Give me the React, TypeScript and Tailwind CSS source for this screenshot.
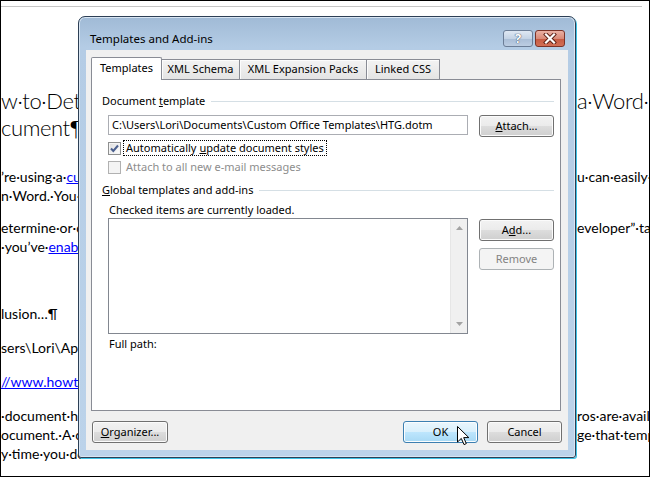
import React from 'react'

const ui = "font-['Noto_Sans','Open_Sans',sans-serif] text-[11px] text-black"

function WinButton({
    children,
    className = '',
    hot = false,
    disabled = false,
}: {
    children: React.ReactNode
    className?: string
    hot?: boolean
    disabled?: boolean
}) {
    let look =
        'border-[#707070] bg-[linear-gradient(#f2f2f2_0%,#ebebeb_49%,#dddddd_50%,#cfcfcf_100%)] shadow-[inset_0_0_0_1px_#fbfbfb]'
    if (hot) {
        look =
            'border-[#3c7fb1] bg-[linear-gradient(#eaf6fd_0%,#d9f0fc_49%,#bee6fd_50%,#a7d9f5_100%)] shadow-[inset_0_0_0_1px_#fbfdfe]'
    }
    if (disabled) {
        look = 'border-[#adb2b5] bg-[#f4f4f4] text-[#838383]'
    }
    return (
        <div className={`h-[22px] w-[75px] shrink-0 rounded-[3px] border flex items-center justify-center ${look} ${className}`}>
            {children}
        </div>
    )
}

function Checkbox({ checked = false, disabled = false }: { checked?: boolean; disabled?: boolean }) {
    return (
        <div
            className={`w-[13px] h-[13px] shrink-0 border flex items-center justify-center ${
                disabled
                    ? 'border-[#b1b1b1] bg-[#f4f4f4]'
                    : 'border-[#8e8f8f] bg-[linear-gradient(135deg,#dcdcdc,#ffffff)] shadow-[inset_0_0_0_1px_#f4f4f4]'
            }`}
        >
            {checked && (
                <svg width="11" height="11" viewBox="0 0 11 11">
                    <path d="M2 5.5 L4.3 8 L9 2.5" fill="none" stroke="#4a5f8e" strokeWidth="2" />
                </svg>
            )}
        </div>
    )
}

function GroupHeader({ children }: { children: React.ReactNode }) {
    return (
        <div className="flex items-center h-[16px] pl-[10px] pr-[6px] gap-[6px]">
            <span className="whitespace-nowrap">{children}</span>
            <div className="flex-1 h-px bg-[#d5dfe5]" />
        </div>
    )
}

// one line of the Word page: the dialog hides its middle
function DocRow({ left, right, className = '' }: { left?: React.ReactNode; right?: React.ReactNode; className?: string }) {
    return (
        <div className={`flex whitespace-nowrap ${className}`}>
            <div className="w-[80px] overflow-hidden">{left}</div>
            <div className="flex-1" />
            <div className="w-[72px] overflow-hidden">{right}</div>
        </div>
    )
}

function Link({ children }: { children: React.ReactNode }) {
    return <span className="text-[#0000ff] underline">{children}</span>
}

export default function App() {
    return (
        <div className="relative w-[650px] h-[477px] overflow-hidden bg-white border border-black">
            {/* Word document behind the dialog */}
            <div className="font-['Lato','Open_Sans',sans-serif] text-black">
                <div className="mt-[5px] h-px bg-[#c6c6c6] mr-[7px]" />
                <DocRow className="mt-[80px] h-[27px] leading-[27px] text-[22px] tracking-[-0.4px] font-light" left="w·to·Det" right="a·Word·" />
                <DocRow className="h-[27px] leading-[27px] text-[22px] tracking-[-0.4px] font-light" left="cument¶" />
                <DocRow
                    className="mt-[26px] h-[19px] leading-[19px] text-[14px]"
                    left={<>’re·using·a·<Link>cu</Link></>}
                    right="u·can·easily·f"
                />
                <DocRow className="h-[19px] leading-[19px] text-[14px]" left="n·Word.·You·c" />
                <DocRow className="mt-[13px] h-[19px] leading-[19px] text-[14px]" left="etermine·or·c" right="eveloper”·tal" />
                <DocRow className="h-[19px] leading-[19px] text-[14px]" left={<>·you’ve·<Link>enab</Link></>} />
                <DocRow className="mt-[48px] h-[19px] leading-[19px] text-[14px]" left="lusion…¶" />
                <DocRow className="mt-[15px] h-[19px] leading-[19px] text-[14px]" left="sers\Lori\App" />
                <DocRow className="mt-[15px] h-[19px] leading-[19px] text-[14px]" left={<Link>//www.howt</Link>} />
                <DocRow className="mt-[15px] h-[19px] leading-[19px] text-[14px]" left="·document·h" right="ros·are·availa" />
                <DocRow className="h-[19px] leading-[19px] text-[14px]" left="ocument.·A·c" right="ge·that·temp" />
                <DocRow className="h-[19px] leading-[19px] text-[14px]" left="y·time·you·de" />
            </div>

            {/* Templates and Add-ins dialog */}
            <div
                className={`absolute left-[77px] top-[15px] w-[498px] h-[442px] rounded-t-[7px] rounded-b-[3px] border border-[#2d3f55] bg-[linear-gradient(180deg,#a0bad6_0px,#b4cce5_30px,#bcd3ea_100%)] shadow-[inset_0_0_0_1px_#d9e6f3,1px_1px_0_#3fc3e6] flex flex-col ${ui}`}
            >
                {/* title bar */}
                <div className="mt-[13px] h-[17px] flex items-center pl-[11px] pr-[10px]">
                    <span className="text-[11.5px]">Templates and Add-ins</span>
                    <div className="flex-1" />
                    <div className="w-[30px] h-[17px] rounded-[3px] border border-[#6b7d96] bg-[linear-gradient(#dfe8f3_0%,#c4d3e5_50%,#a9bdd6_51%,#bccde2_100%)] flex items-center justify-center">
                        <span className="text-[13px] leading-none font-bold text-white [text-shadow:0_0_1px_#34435a,0_0_1px_#34435a]">?</span>
                    </div>
                    <div className="ml-[2px] w-[30px] h-[17px] rounded-[3px] border border-[#7b3328] bg-[linear-gradient(#eab1a4_0%,#d98a78_50%,#c65a42_51%,#d26f56_100%)] flex items-center justify-center">
                        <svg width="14" height="11" viewBox="0 0 14 11">
                            <path d="M3 1.5 L11 9.5 M11 1.5 L3 9.5" stroke="#5a1d12" strokeWidth="4" strokeLinecap="square" />
                            <path d="M3 1.5 L11 9.5 M11 1.5 L3 9.5" stroke="#ffffff" strokeWidth="2.2" strokeLinecap="square" />
                        </svg>
                    </div>
                </div>

                {/* client area */}
                <div className="relative mt-[3px] mx-[7px] h-[400px] bg-[#f0f0f0] flex flex-col">
                    {/* tabs */}
                    <div className="mt-[7px] ml-[5px] h-[23px] flex items-end">
                        <div className="relative z-10 h-[23px] w-[71px] bg-white border border-b-0 border-[#898c95] rounded-t-[2px] flex items-center justify-center pb-[1px]">
                            Templates
                        </div>
                        <div className="h-[21px] w-[78px] border border-l-0 border-b-0 border-[#898c95] bg-[linear-gradient(#f3f3f3,#e3e3e3)] shadow-[inset_1px_1px_0_#fcfcfc] flex items-center justify-center pb-[2px]">
                            XML Schema
                        </div>
                        <div className="h-[21px] w-[127px] border border-l-0 border-b-0 border-[#898c95] bg-[linear-gradient(#f3f3f3,#e3e3e3)] shadow-[inset_1px_1px_0_#fcfcfc] flex items-center justify-center pb-[2px]">
                            XML Expansion Packs
                        </div>
                        <div className="h-[21px] w-[73px] border border-l-0 border-b-0 border-[#898c95] bg-[linear-gradient(#f3f3f3,#e3e3e3)] shadow-[inset_1px_1px_0_#fcfcfc] flex items-center justify-center pb-[2px]">
                            Linked CSS
                        </div>
                    </div>

                    {/* tab panel */}
                    <div className="-mt-px ml-[5px] w-[470px] h-[332px] border border-[#898c95] bg-white flex flex-col">
                        <div className="mt-[13px]">
                            <GroupHeader>
                                Document <u>t</u>emplate
                            </GroupHeader>
                        </div>

                        <div className="mt-[6px] pl-[16px] pr-[6px] flex items-start justify-between">
                            <div className="w-[360px] h-[20px] border border-[#abadb3] bg-white flex items-center pl-[3px] whitespace-nowrap overflow-hidden">
                                C:\Users\Lori\Documents\Custom Office Templates\HTG.dotm
                            </div>
                            <WinButton>
                                <span>
                                    <u>A</u>ttach...
                                </span>
                            </WinButton>
                        </div>

                        <div className="mt-[3px] pl-[16px] h-[16px] flex items-center">
                            <Checkbox checked />
                            <span className="ml-[2px] px-[2px] h-[16px] flex items-center border border-dotted border-black">
                                Automatically <u className="ml-[3px]">u</u>pdate document styles
                            </span>
                        </div>

                        <div className="mt-[3px] pl-[16px] h-[16px] flex items-center">
                            <Checkbox disabled />
                            <span className="ml-[5px] text-[#8d8d8d]">Attach to all new e-mail messages</span>
                        </div>

                        <div className="mt-[7px]">
                            <GroupHeader>
                                <u>G</u>lobal templates and add-ins
                            </GroupHeader>
                        </div>

                        <div className="mt-[5px] pl-[17px] h-[15px] flex items-center">Checked items are currently loaded.</div>

                        <div className="pl-[16px] pr-[6px] flex items-start justify-between">
                            <div className="w-[360px] h-[116px] border border-[#828790] bg-white flex justify-end">
                                <div className="w-[17px] h-full bg-[#f0f0f0] border-l border-[#e6e6e6] flex flex-col items-center justify-between py-[7px]">
                                    <svg width="7" height="4" viewBox="0 0 7 4">
                                        <path d="M0 4 L3.5 0 L7 4 Z" fill="#a3a3a3" />
                                    </svg>
                                    <svg width="7" height="4" viewBox="0 0 7 4">
                                        <path d="M0 0 L3.5 4 L7 0 Z" fill="#a3a3a3" />
                                    </svg>
                                </div>
                            </div>
                            <div className="mt-[1px] flex flex-col gap-[7px]">
                                <WinButton>
                                    <span>
                                        A<u>d</u>d...
                                    </span>
                                </WinButton>
                                <WinButton disabled>Remove</WinButton>
                            </div>
                        </div>

                        <div className="mt-[2px] pl-[17px] h-[16px] flex items-center">Full path:</div>
                    </div>

                    {/* bottom buttons */}
                    <div className="mt-[10px] flex items-start pl-[6px] pr-[6px]">
                        <WinButton className="w-[76px]">
                            <span>
                                <u>O</u>rganizer...
                            </span>
                        </WinButton>
                        <div className="flex-1" />
                        <WinButton hot>OK</WinButton>
                        <WinButton className="ml-[9px]">Cancel</WinButton>
                    </div>

                    {/* mouse pointer over OK */}
                    <svg className="absolute left-[371px] top-[376px]" width="13" height="20" viewBox="0 0 13 20">
                        <path
                            d="M0.5 0.5 L0.5 16 L4.3 12.4 L7 18.6 L9.3 17.6 L6.7 11.6 L11.8 11.6 Z"
                            fill="#ffffff"
                            stroke="#000000"
                            strokeWidth="1"
                            strokeLinejoin="round"
                        />
                    </svg>
                </div>
            </div>
        </div>
    )
}
